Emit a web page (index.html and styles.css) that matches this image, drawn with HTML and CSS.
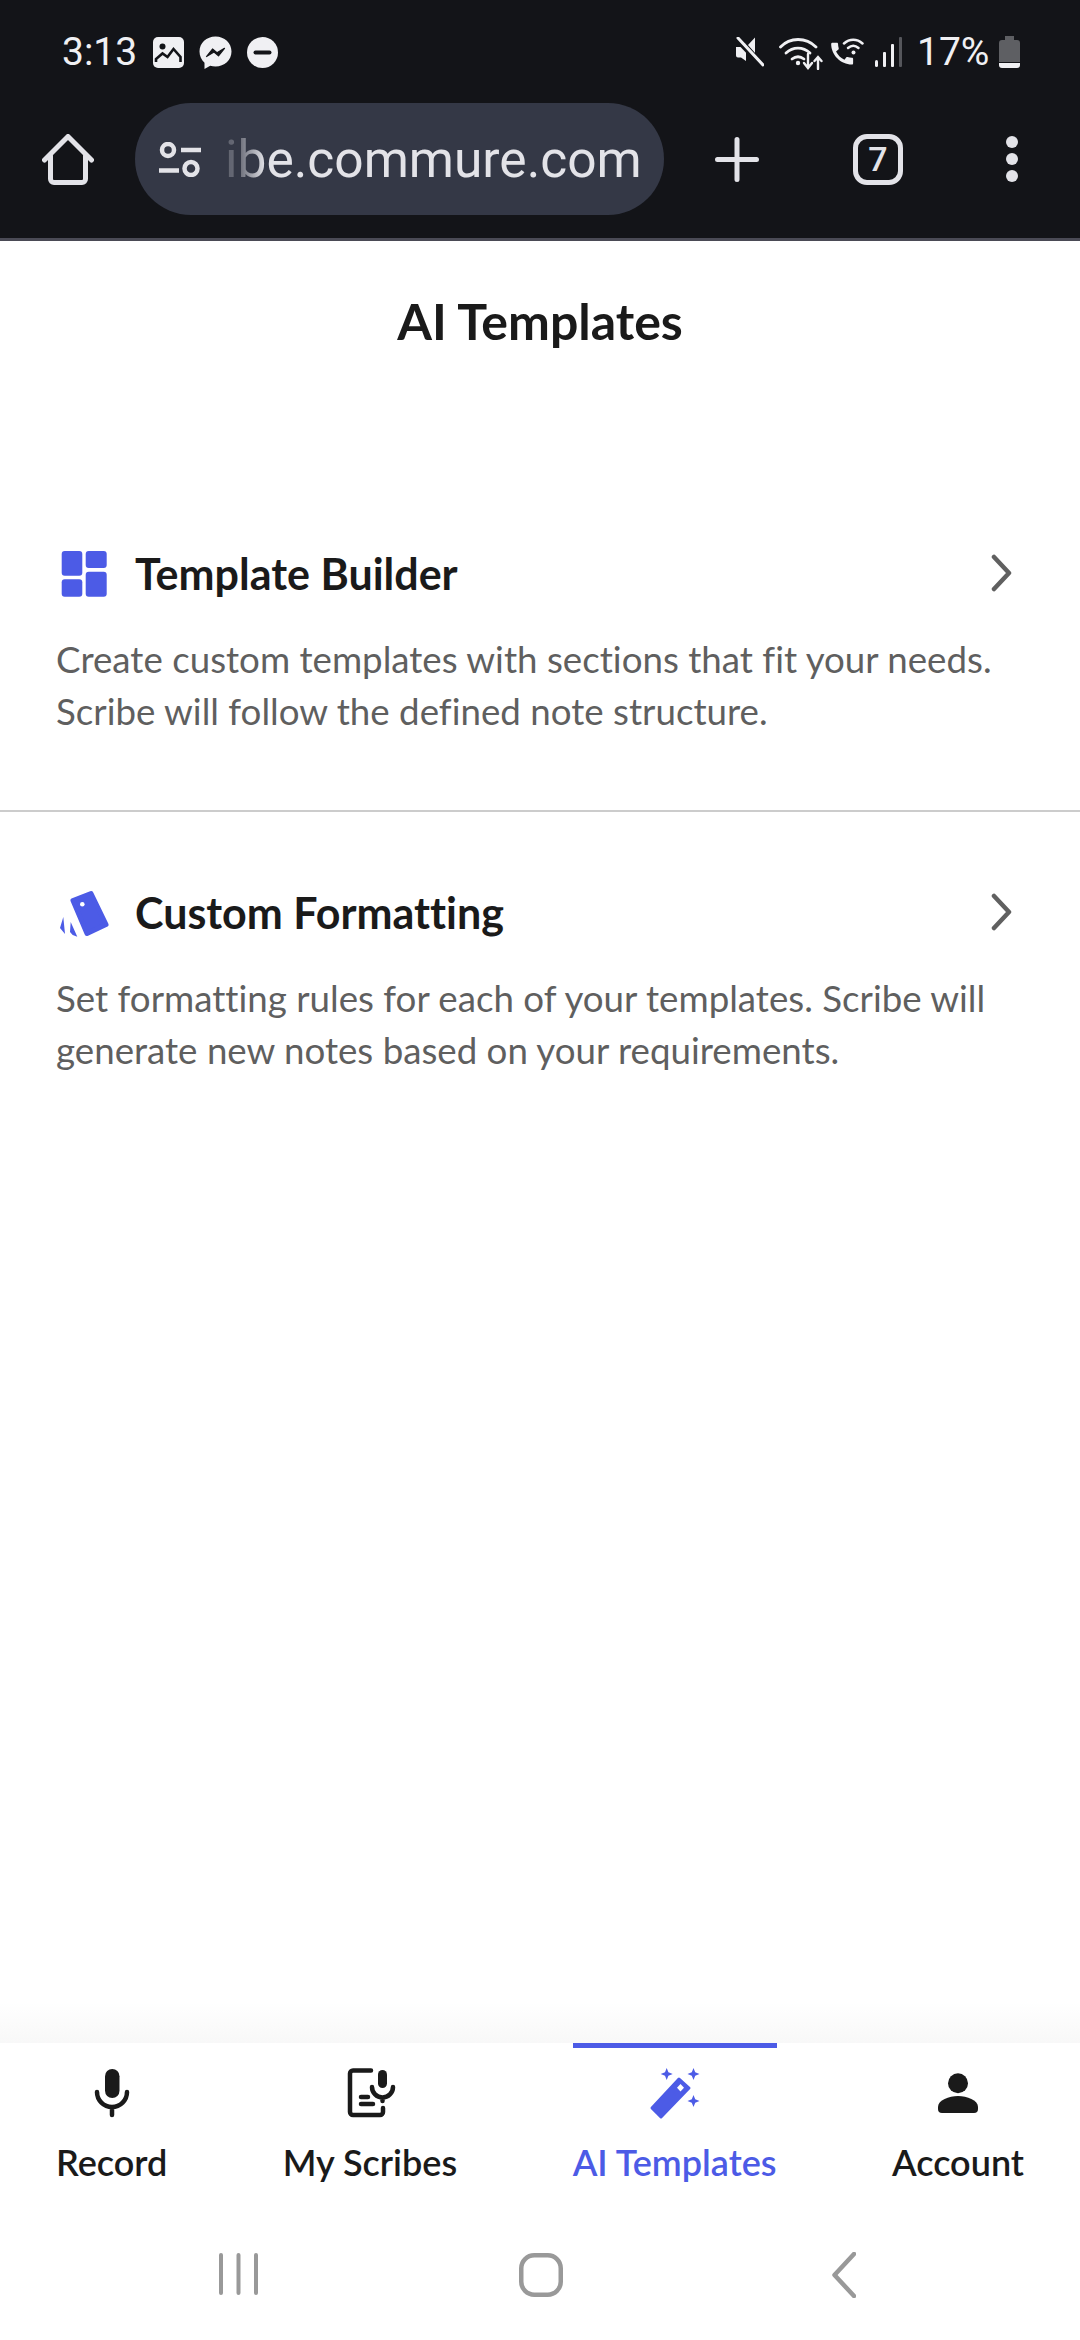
FILE: index.html
```html
<!DOCTYPE html>
<html lang="en">

<head>
  <meta charset="UTF-8">
  <meta name="viewport" content="width=device-width, initial-scale=1.0">
  <title>AI Templates</title>
  <link rel="stylesheet" href="styles.css">
</head>

<body>
  <div class="screen">
    <header class="chrome">
      <div class="status-bar">
        <span class="clock">3:13</span>
        <svg class="st-image" width="31" height="31" viewBox="0 0 31 31">
          <rect width="31" height="31" rx="5" fill="#f0f0f3" />
          <circle cx="9.500" cy="9.500" r="3" fill="#131418" />
          <path d="M3 25v-3l6.500-5.500 5 3.500 6-8 7 8v5" fill="none" stroke="#131418" stroke-width="2.600" />
        </svg>
        <svg class="st-msg" width="33" height="33" viewBox="0 0 33 33">
          <path d="M16.500 0.500C7.500 0.500 0.500 7 0.500 15.500c0 4.500 2 8.400 5 11.200V33l5.700-3.200c1.700.5 3.400.7 5.300.7 9 0 16-6.500 16-15S25.500.5 16.500.5z" fill="#f0f0f3" />
          <path d="M7.500 20.500l6-7.500 4.500 3.800 7.500-4.500-6 7.500-4.500-3.800z" fill="#131418" stroke="#131418" stroke-width="1.200" stroke-linejoin="round" />
        </svg>
        <svg class="st-dnd" width="31" height="31" viewBox="0 0 31 31">
          <circle cx="15.500" cy="15.500" r="15.500" fill="#f0f0f3" />
          <rect x="6.500" y="13.500" width="18" height="4" rx="2" fill="#131418" />
        </svg>

        <svg class="st-mute" width="29" height="30" viewBox="0 0 29 30">
          <path d="M1 10h5L11 6.500V24L6 20.500H3a2 2 0 0 1-2-2zM13 8l7-7.500V16z" fill="#f0f0f3" />
          <path d="M2 2l25 26" stroke="#131418" stroke-width="6" />
          <path d="M3 1l25 27" stroke="#f0f0f3" stroke-width="3" stroke-linecap="round" />
        </svg>
        <svg class="st-wifi" width="44" height="34" viewBox="0 0 44 34" fill="none" stroke="#f0f0f3" stroke-linecap="round">
          <path d="M1.500 11C11 1 27 1 37 11" stroke-width="2.800" />
          <path d="M7 17c7-6.500 17-6.500 24 0" stroke-width="2.800" />
          <path d="M13 23c4-3 8-3 12 0" stroke-width="2.800" />
          <circle cx="19" cy="27" r="2.200" fill="#f0f0f3" stroke="none" />
          <path d="M29 18v13M25 27l4 5 4-5" stroke-width="2.400" />
          <path d="M39 33V22M35.500 25l3.500-4 3.500 4" stroke-width="2.400" />
        </svg>
        <svg class="st-call" width="34" height="30" viewBox="0 0 34 30">
          <path transform="translate(-2.500 1) scale(1.220)" d="M20.010 15.380c-1.230 0-2.420-.2-3.530-.56-.35-.12-.74-.03-1.010.24l-1.570 1.970c-2.830-1.350-5.480-3.900-6.890-6.830l1.950-1.660c.27-.28.35-.67.24-1.020-.37-1.110-.56-2.300-.56-3.530 0-.54-.45-.99-.99-.99H4.190C3.650 3 3 3.240 3 3.990 3 13.280 10.730 21 20.010 21c.71 0 .99-.63.99-1.180v-3.450c0-.54-.45-.99-.99-.99z" fill="#f0f0f3" />
          <g fill="none" stroke="#f0f0f3" stroke-width="2.500" stroke-linecap="round">
            <path d="M14 5.500c5.500-5 13-5 18.500 0" />
            <path d="M18 10c3.500-3 7-3 10.500 0" />
          </g>
          <circle cx="23.500" cy="14.500" r="2" fill="#f0f0f3" />
        </svg>
        <svg class="st-signal" width="27" height="30" viewBox="0 0 27 30">
          <rect x="0" y="23" width="3" height="7" rx="1.500" fill="#f0f0f3" />
          <rect x="8" y="15" width="3" height="15" rx="1" fill="#f0f0f3" />
          <rect x="16" y="7" width="3" height="23" rx="1" fill="#f0f0f3" />
          <rect x="24" y="0" width="3" height="30" rx="1" fill="#55565b" />
        </svg>
        <span class="battery-pct">17%</span>
        <svg class="st-battery" width="21" height="32" viewBox="0 0 21 32">
          <path d="M6 0h9v4h3a3 3 0 0 1 3 3v19H0V7a3 3 0 0 1 3-3h3z" fill="#5e5f63" />
          <path d="M0 27h21v2a3 3 0 0 1-3 3H3a3 3 0 0 1-3-3z" fill="#f0f0f3" />
        </svg>
      </div>

      <div class="toolbar">
        <svg class="tb-home" width="52" height="51" viewBox="0 0 52 51" fill="none" stroke="#e3e3e8" stroke-width="5" stroke-linecap="round" stroke-linejoin="round">
          <path d="M2.500 26L26 2.500 49.500 26" />
          <path d="M8.500 22v23a3.500 3.500 0 0 0 3.500 3.500h28a3.500 3.500 0 0 0 3.500-3.500V22" />
        </svg>
        <div class="url-pill">
          <svg class="url-icon" width="42" height="35" viewBox="0 0 42 35" fill="none" stroke="#e3e3e8" stroke-width="4.500">
            <circle cx="9" cy="8" r="6" />
            <circle cx="32" cy="26.500" r="6.500" />
            <path d="M22 8h20M0 28.500h20" />
          </svg>
          <span class="url-text">ibe.commure.com</span>
        </div>
        <svg class="tb-plus" width="44" height="45" viewBox="0 0 44 45" stroke="#e3e3e8" stroke-width="5" stroke-linecap="round">
          <path d="M22 2.500v40M2.500 22.500h39" />
        </svg>
        <div class="tab-count">7</div>
        <div class="tb-dots"><i></i><i></i><i></i></div>
      </div>
    </header>

    <main class="content">
      <h1 class="page-title">AI Templates</h1>

      <section class="feature feature-first">
        <div class="feature-head">
          <svg class="feature-icon" width="79" height="52" viewBox="0 0 79 52" fill="#4c5be6">
            <rect x="5.700" y="4" width="20.600" height="24.700" rx="3" />
            <rect x="29.700" y="4" width="21" height="17" rx="3" />
            <rect x="5.700" y="32.300" width="20.600" height="17.400" rx="3" />
            <rect x="29.700" y="24.700" width="21" height="25" rx="3" />
          </svg>
          <h2>Template Builder</h2>
          <svg class="chevron" width="24" height="38" viewBox="0 0 24 38" fill="none" stroke="#606060" stroke-width="4.500" stroke-linecap="round" stroke-linejoin="round">
            <path d="M4 3l15 16L4 35" />
          </svg>
        </div>
        <p>Create custom templates with sections that fit your needs. Scribe will follow the defined note structure.</p>
      </section>

      <section class="feature">
        <div class="feature-head">
          <svg class="feature-icon" width="79" height="52" viewBox="0 0 79 52" fill="#4c5be6">
            <path d="M17 14.500L35 7.500l15 31-19 9z" stroke="#4c5be6" stroke-width="5" stroke-linejoin="round" />
            <circle cx="26.300" cy="18.300" r="2.300" fill="#fff" />
            <path d="M7.300 31L4 42l5 6zM14.700 36L14 46l2.700 3 4.600 1.700z" />
          </svg>
          <h2>Custom Formatting</h2>
          <svg class="chevron" width="24" height="38" viewBox="0 0 24 38" fill="none" stroke="#606060" stroke-width="4.500" stroke-linecap="round" stroke-linejoin="round">
            <path d="M4 3l15 16L4 35" />
          </svg>
        </div>
        <p>Set formatting rules for each of your templates. Scribe will generate new notes based on your requirements.</p>
      </section>
    </main>

    <nav class="tabs">
      <a class="tab">
        <svg width="70" height="54" viewBox="0 0 70 54" fill="none" stroke="#1a1a1a" stroke-width="4.500" stroke-linecap="round">
          <rect x="28" y="3" width="14.500" height="29" rx="7.250" fill="#1a1a1a" stroke="none" />
          <path d="M20 26a15 15 0 0 0 30 0M35 41v8" />
        </svg>
        <span>Record</span>
      </a>
      <a class="tab">
        <svg width="70" height="54" viewBox="0 0 70 54" fill="none" stroke="#1a1a1a" stroke-width="4.500" stroke-linecap="round">
          <path d="M36 4.500H18a3 3 0 0 0-3 3V46a3 3 0 0 0 3 3H45a3 3 0 0 0 3-3v-4" />
          <path d="M26 31h7M26 38h12" />
          <rect x="43" y="4" width="9" height="18" rx="4.500" fill="#1a1a1a" stroke="none" />
          <path d="M37 21a10.500 10.500 0 0 0 21 0M47.500 32v3" />
        </svg>
        <span>My Scribes</span>
      </a>
      <a class="tab tab-active">
        <svg width="70" height="54" viewBox="0 0 70 54" fill="#4c5be6">
          <path d="M12 42L39 13l10 9-28 29z" stroke="#4c5be6" stroke-width="3" stroke-linejoin="round" />
          <path d="M40.500 18l3.500 3.700-3.500 3.700-3.500-3.700z" fill="#fff" />
          <path d="M26.700 2l1.700 4.300 4.300 1.700-4.300 1.700-1.700 4.300-1.700-4.300-4.300-1.700 4.300-1.700z" />
          <path d="M53.500 2l1.700 4.300 4.300 1.700-4.300 1.700-1.700 4.300-1.700-4.300-4.300-1.700 4.300-1.700z" />
          <path d="M53.500 29l1.700 4.300 4.300 1.700-4.300 1.700-1.700 4.300-1.700-4.300-4.300-1.700 4.300-1.700z" />
        </svg>
        <span>AI Templates</span>
      </a>
      <a class="tab">
        <svg width="70" height="54" viewBox="0 0 70 54" fill="#1a1a1a">
          <circle cx="35" cy="17.300" r="10" />
          <path d="M15 41c0-7 11-11 20-11s20 4 20 11v2a4 4 0 0 1-4 4H19a4 4 0 0 1-4-4z" />
        </svg>
        <span>Account</span>
      </a>
    </nav>

    <div class="sys-nav">
      <svg class="sys-recents" width="39" height="42" viewBox="0 0 39 42" stroke="#999" stroke-width="4" stroke-linecap="round">
        <path d="M2 2v38M19.500 2v38M37 2v38" />
      </svg>
      <svg class="sys-home" width="44" height="44" viewBox="0 0 44 44" fill="none" stroke="#999" stroke-width="4.500">
        <rect x="2.250" y="2.250" width="39.500" height="39.500" rx="13" />
      </svg>
      <svg class="sys-back" width="24" height="46" viewBox="0 0 24 46" fill="none" stroke="#999" stroke-width="4.500" stroke-linecap="round" stroke-linejoin="round">
        <path d="M22 2L2.500 23 22 44" />
      </svg>
    </div>
  </div>
</body>

</html>
```

FILE: styles.css
```css
* {
  box-sizing: border-box;
}

body {
  margin: 0;
  background-color: #fff;
  font-family: 'Lato', sans-serif;
  font-variant-ligatures: none;
}

.screen {
  width: 1080px;
  height: 2340px;
  display: flex;
  flex-direction: column;
  overflow: hidden;
}

/* browser chrome */
.chrome {
  height: 241px;
  background-color: #131418;
  border-bottom: 3px solid #4a4a55;
  font-family: 'Roboto', sans-serif;
}

.status-bar {
  height: 103px;
  padding: 36px 0 0 62px;
  display: flex;
  align-items: flex-start;
  color: #f0f0f3;
}

.clock {
  width: 91px;
  font-size: 39px;
  line-height: 33px;
}

.status-bar svg {
  flex: none;
}

.st-image { margin-top: 1px; }
.st-msg { margin-left: 15px; }
.st-dnd { margin: 1px 0 0 15px; }
.st-mute { margin: 1px 0 0 457px; }
.st-wifi { margin: 0 0 0 15px; }
.st-call { margin: 2px 0 0 7px; }
.st-signal { margin: 1px 0 0 11px; }

.battery-pct {
  margin-left: 15px;
  width: 82px;
  font-size: 39px;
  line-height: 33px;
}

.toolbar {
  height: 112px;
  padding-left: 42px;
  display: flex;
  align-items: center;
}

.toolbar > * {
  flex: none;
}

.url-pill {
  width: 529px;
  height: 112px;
  margin-left: 41px;
  padding-left: 24px;
  background-color: #343846;
  border-radius: 56px;
  display: flex;
  align-items: center;
  color: #e3e3e8;
}

.url-icon {
  flex: none;
}

.url-text {
  margin-left: 24px;
  font-size: 51.5px;
  white-space: nowrap;
  -webkit-mask-image: linear-gradient(to right, rgba(0, 0, 0, 0.25) 0, rgba(0, 0, 0, 0.3) 14px, #000 40px);
  mask-image: linear-gradient(to right, rgba(0, 0, 0, 0.25) 0, rgba(0, 0, 0, 0.3) 14px, #000 40px);
}

.tb-plus {
  margin-left: 51px;
}

.tab-count {
  width: 50px;
  height: 51px;
  margin-left: 94px;
  border: 5px solid #e3e3e8;
  border-radius: 14px;
  color: #e3e3e8;
  font-size: 34px;
  font-weight: 500;
  line-height: 41px;
  text-align: center;
}

.tb-dots {
  margin-left: 103px;
  display: flex;
  flex-direction: column;
  gap: 5px;
}

.tb-dots i {
  display: block;
  width: 12px;
  height: 12px;
  border-radius: 50%;
  background-color: #e3e3e8;
}

/* page */
.content {
  flex: 1;
  color: #1a1a1a;
}

.page-title {
  margin: 50px 0 0;
  font-size: 50px;
  font-weight: 700;
  line-height: 60px;
  text-align: center;
}

.feature {
  padding: 70px 66px 71px 56px;
  border-bottom: 2px solid #ccc;
}

.feature:last-child {
  border-bottom: none;
}

.feature-first {
  margin-top: 122px;
  padding-bottom: 73px;
}

.feature-head {
  height: 60px;
  display: flex;
  align-items: center;
}

.feature-icon {
  flex: none;
}

.feature-head h2 {
  flex: 1;
  margin: 0;
  font-size: 43px;
  font-weight: 700;
}

.feature p {
  margin: 30px 0 0;
  color: #5f5f5f;
  font-size: 36.7px;
  line-height: 52px;
}

/* bottom tabs */
.tabs {
  position: relative;
  height: 161px;
  padding: 0 56px;
  background-color: #fff;
  display: flex;
  justify-content: space-between;
}

.tabs::before {
  content: "";
  position: absolute;
  left: 0;
  right: 0;
  top: -40px;
  height: 40px;
  background: linear-gradient(to bottom, rgba(248, 248, 248, 0), #f8f8f8);
}

.tab {
  display: flex;
  flex-direction: column;
  align-items: center;
  padding-top: 18px;
  border-top: 5px solid transparent;
  color: #1a1a1a;
}

.tab span {
  margin-top: 19px;
  font-size: 36px;
  font-weight: 600;
  line-height: 46px;
  white-space: nowrap;
}

.tab-active {
  border-top-color: #4c5be6;
  color: #4c5be6;
}

/* android nav */
.sys-nav {
  height: 136px;
  padding: 49px 0 0 219px;
  display: flex;
  align-items: flex-start;
}

.sys-home {
  margin-left: 261px;
}

.sys-back {
  margin: -1px 0 0 269px;
}
```
